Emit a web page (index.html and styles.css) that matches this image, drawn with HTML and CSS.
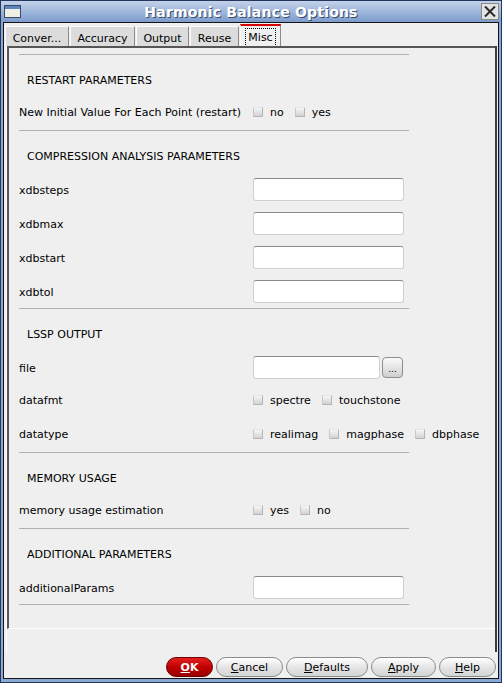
FILE: index.html
```html
<!DOCTYPE html>
<html>
<head>
<meta charset="utf-8">
<link rel="stylesheet" href="styles.css">
</head>
<body>
<div class="window">
  <div class="titlebar">
    <svg class="winicon" width="17" height="13" viewBox="0 0 17 13">
      <rect x="0.5" y="0.5" width="16" height="12" fill="#eef0e4" stroke="#3a4a66"/>
      <rect x="1" y="1" width="15" height="3" fill="#5f84bc"/>
    </svg>
    <div class="title">Harmonic Balance Options</div>
    <div class="close">
      <svg width="18" height="17" viewBox="0 0 18 17">
        <rect x="0.5" y="0.5" width="17" height="16" fill="#e4e4e4" stroke="#8a8a8a"/>
        <path d="M4 3.5 L14 13.5 M14 3.5 L4 13.5" stroke="#2a2a2a" stroke-width="2"/>
      </svg>
    </div>
  </div>
  <div class="client">
    <div class="tabbar">
      <div class="tab tab-conv">Conver...</div>
      <div class="tab tab-acc">Accuracy</div>
      <div class="tab tab-out">Output</div>
      <div class="tab tab-reuse">Reuse</div>
      <div class="tab tab-sel"><span class="focus">Misc</span></div>
    </div>
    <div class="pane">
      <div class="scroll">
        <div class="content">
          <div class="sep"></div>
          <div class="hdr">RESTART PARAMETERS</div>
          <div class="row cbrow">
            <div class="lbl">New Initial Value For Each Point (restart)</div>
            <div class="opts"><span class="cb"></span><span class="opt">no</span><span class="cb"></span><span class="opt">yes</span></div>
          </div>
          <div class="sep"></div>
          <div class="hdr">COMPRESSION ANALYSIS PARAMETERS</div>
          <div class="row"><div class="lbl">xdbsteps</div><div class="field"></div></div>
          <div class="row"><div class="lbl">xdbmax</div><div class="field"></div></div>
          <div class="row"><div class="lbl">xdbstart</div><div class="field"></div></div>
          <div class="row"><div class="lbl">xdbtol</div><div class="field"></div></div>
          <div class="sep"></div>
          <div class="hdr">LSSP OUTPUT</div>
          <div class="row"><div class="lbl">file</div><div class="field field-short"></div><div class="browse">...</div></div>
          <div class="row cbrow-tight">
            <div class="lbl">datafmt</div>
            <div class="opts"><span class="cb"></span><span class="opt">spectre</span><span class="cb"></span><span class="opt">touchstone</span></div>
          </div>
          <div class="row cbrow cbrow-gap">
            <div class="lbl">datatype</div>
            <div class="opts"><span class="cb"></span><span class="opt">realimag</span><span class="cb"></span><span class="opt">magphase</span><span class="cb"></span><span class="opt">dbphase</span></div>
          </div>
          <div class="sep"></div>
          <div class="hdr">MEMORY USAGE</div>
          <div class="row cbrow">
            <div class="lbl">memory usage estimation</div>
            <div class="opts"><span class="cb"></span><span class="opt">yes</span><span class="cb"></span><span class="opt">no</span></div>
          </div>
          <div class="sep"></div>
          <div class="hdr">ADDITIONAL PARAMETERS</div>
          <div class="row"><div class="lbl">additionalParams</div><div class="field"></div></div>
          <div class="sep"></div>
        </div>
      </div>
    </div>
    <div class="buttons">
      <div class="btn btn-ok"><u>O</u>K</div>
      <div class="btn btn-cancel"><u>C</u>ancel</div>
      <div class="btn btn-defaults"><u>D</u>efaults</div>
      <div class="btn btn-apply"><u>A</u>pply</div>
      <div class="btn btn-help"><u>H</u>elp</div>
    </div>
  </div>
</div>
</body>
</html>
```

FILE: styles.css
```css
* { box-sizing: border-box; }
html, body { margin: 0; padding: 0; }
body {
  font-family: "DejaVu Sans", sans-serif;
  font-size: 11px;
  color: #000;
  background: #8aa6d2;
}
.window {
  width: 502px;
  height: 683px;
  border: 1px solid #23375c;
  background: #8ba7d3;
  padding: 0 2px 3px 2px;
  display: flex;
  flex-direction: column;
}
.titlebar {
  height: 21px;
  margin: 0 -2px;
  background: linear-gradient(#c2d2ea, #7d9ccc);
  position: relative;
  display: flex;
  align-items: center;
  justify-content: center;
}
.winicon {
  position: absolute;
  left: 3px;
  top: 4px;
}
.title {
  color: #fff;
  font-weight: bold;
  font-size: 14px;
  text-shadow: 1px 1px 0 #3a4c6c;
  letter-spacing: 0.2px;
}
.close {
  position: absolute;
  right: 2px;
  top: 2px;
  height: 17px;
}
.client {
  flex: 1;
  border: 1px solid #151515;
  background: #efefef;
  display: flex;
  flex-direction: column;
}
.tabbar {
  height: 23px;
  display: flex;
  align-items: flex-end;
  padding-left: 1px;
}
.tab {
  height: 20px;
  padding-top: 3px;
  background: #dcdcdc;
  border-top: 1px solid #fafafa;
  border-left: 1px solid #fafafa;
  border-right: 1px solid #8c8c8c;
  margin-right: 1px;
  display: flex;
  align-items: center;
  justify-content: center;
}
.tab-conv { width: 64px; }
.tab-acc { width: 65px; }
.tab-out { width: 53px; }
.tab-reuse { width: 49px; }
.tab-sel {
  width: 41px;
  height: 22px;
  background: #f0f0f0;
  border-top: 2px solid #d40000;
  padding-top: 3px;
}
.focus {
  outline: 1px dotted #000;
  outline-offset: 0;
  padding: 2px 2px;
  line-height: 13px;
}
.pane {
  height: 606px;
  margin: 0 1px 0 2px;
  border-left: 1px solid #ffffff;
  border-right: 2px solid #3c3c3c;
}
.scroll {
  height: 583px;
  border-top: 2px solid #565656;
  border-left: 2px solid #565656;
  border-bottom: 1px solid #ffffff;
}
.content {
  padding: 6px 0 0 10px;
}
.sep {
  width: 390px;
  height: 1px;
  background: #b0b0b0;
}
.hdr {
  height: 33px;
  margin-top: 8px;
  padding: 2px 0 0 8px;
  display: flex;
  align-items: center;
}
.row {
  height: 34px;
  display: flex;
  align-items: center;
}
.cbrow { height: 30px; margin-bottom: 4px; }
.cbrow-tight { height: 30px; }
.cbrow-gap { margin-top: 4px; }
.lbl {
  width: 234px;
  flex: none;
  padding-top: 2px;
}
.opts {
  display: flex;
  align-items: center;
  padding-top: 2px;
}
.cb {
  width: 10px;
  height: 10px;
  flex: none;
  background: linear-gradient(#f6f6f6, #d2d2d2);
  border: 1px solid #b4b4b4;
  border-top-color: #e6e6e6;
  border-left-color: #c8c8c8;
  border-radius: 1px;
  margin-right: 7px;
}
.opt {
  margin-right: 11px;
}
.field {
  width: 151px;
  height: 23px;
  background: #fff;
  border: 1px solid #d0d0d0;
  border-top-color: #8c8c8c;
  border-radius: 3px;
}
.field-short { width: 127px; }
.browse {
  width: 21px;
  height: 21px;
  margin-left: 2px;
  border: 1px solid #8e8e8e;
  border-radius: 4px;
  background: linear-gradient(#fafafa, #cfcfcf);
  font-size: 9px;
  display: flex;
  align-items: flex-end;
  justify-content: center;
  padding-bottom: 3px;
  line-height: 9px;
}
.buttons {
  display: flex;
  justify-content: flex-end;
  gap: 3px;
  margin: 5px 2px 0 0;
}
.btn {
  height: 20px;
  border: 1px solid #8a8a8a;
  border-radius: 10px;
  background: linear-gradient(#ffffff, #e6e6e6 50%, #d4d4d4);
  display: flex;
  align-items: center;
  justify-content: center;
  padding-top: 1px;
}
.btn u { text-underline-offset: 1px; }
.btn-ok {
  width: 47px;
  background: linear-gradient(#e42020, #c00000 50%, #9a0000);
  border-color: #6a0000;
  color: #fff;
  font-weight: bold;
}
.btn-cancel { width: 67px; }
.btn-defaults { width: 82px; }
.btn-apply { width: 65px; }
.btn-help { width: 57px; }
```
